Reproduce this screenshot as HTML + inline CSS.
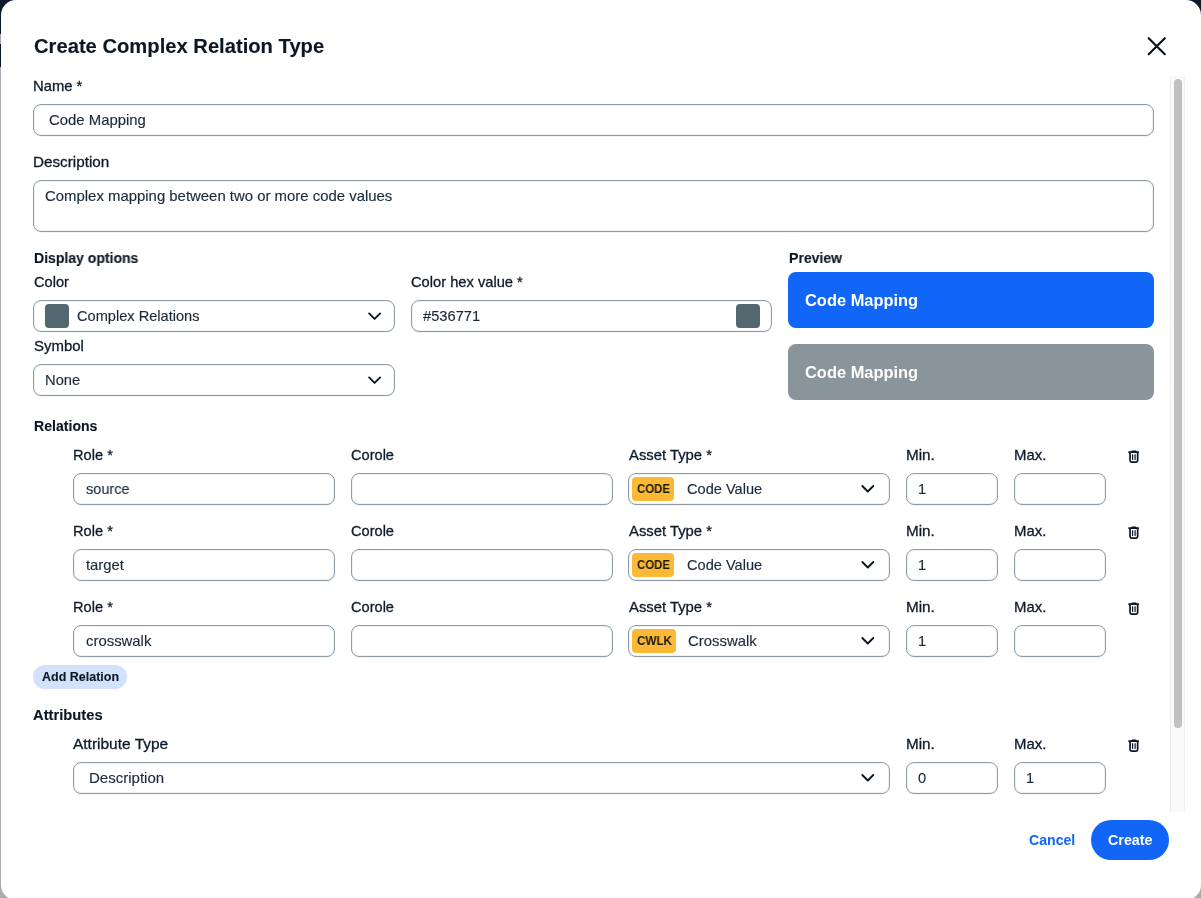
<!DOCTYPE html>
<html><head><meta charset="utf-8"><title>Create Complex Relation Type</title>
<style>
html,body{margin:0;padding:0;}
body{width:1201px;height:898px;overflow:hidden;position:relative;background:#a9abad;font-family:"Liberation Sans",sans-serif;}
.bgtop{position:absolute;left:0;top:0;width:1201px;height:34px;background:#0b1a2a;}
.bgtop2{position:absolute;left:0;top:44px;width:2px;height:23px;background:#0b1a2a;}
.modal{position:absolute;left:1px;top:0;width:1200px;height:900px;background:#fff;border-radius:15px;overflow:hidden;}
.t{position:absolute;white-space:pre;line-height:1;will-change:transform;transform-origin:0 0;}
.b{position:absolute;}
</style></head>
<body>
<div class="bgtop"></div><div class="bgtop2"></div>
<div class="modal">
<div style="position:absolute;left:-1px;top:0;width:1201px;height:898px;">
<div class="t" style="left:34.20px;top:36.00px;font-size:20.2px;font-weight:700;color:#0a1725;-webkit-text-stroke:0.12px #0a1725;">Create Complex Relation Type</div>
<svg class="b" style="left:1144px;top:34px" width="26" height="26" viewBox="0 0 26 26"><path d="M4.7 4.2 L20.8 20.2 M20.8 4.2 L4.7 20.2" stroke="#02101e" stroke-width="2.1" stroke-linecap="round"/></svg>
<div class="t" style="left:32.89px;top:79.10px;font-size:14.6px;font-weight:400;color:#0e1b2b;-webkit-text-stroke:0.3px #0e1b2b;transform:scaleX(1.0146);">Name *</div>
<div class="b" style="left:33px;top:104px;width:1121px;height:32px;border:1px solid #8f9ba5;border-radius:8px;box-sizing:border-box;box-shadow:inset 0 0 0 1px rgba(140,155,166,0.13),0 1px 0 rgba(140,155,166,0.10);"></div>
<div class="t" style="left:49.30px;top:113.00px;font-size:14.6px;font-weight:400;color:#1b2a3a;-webkit-text-stroke:0.15px #1b2a3a;transform:scaleX(1.0202);">Code Mapping</div>
<div class="t" style="left:33.26px;top:155.20px;font-size:14.6px;font-weight:400;color:#0e1b2b;-webkit-text-stroke:0.3px #0e1b2b;transform:scaleX(1.0444);">Description</div>
<div class="b" style="left:33px;top:180px;width:1121px;height:52px;border:1px solid #8f9ba5;border-radius:8px;box-sizing:border-box;box-shadow:inset 0 0 0 1px rgba(140,155,166,0.13),0 1px 0 rgba(140,155,166,0.10);"></div>
<div class="t" style="left:45.30px;top:189.00px;font-size:14.6px;font-weight:400;color:#1b2a3a;-webkit-text-stroke:0.15px #1b2a3a;transform:scaleX(1.0218);">Complex mapping between two or more code values</div>
<div class="t" style="left:33.90px;top:251.00px;font-size:14.1px;font-weight:700;color:#0a1725;-webkit-text-stroke:0.12px #0a1725;transform:scaleX(0.9943);">Display options</div>
<div class="t" style="left:33.90px;top:275.00px;font-size:14.6px;font-weight:400;color:#0e1b2b;-webkit-text-stroke:0.3px #0e1b2b;transform:scaleX(1.0029);">Color</div>
<div class="b" style="left:33px;top:300px;width:362px;height:32px;border:1px solid #8f9ba5;border-radius:8px;box-sizing:border-box;box-shadow:inset 0 0 0 1px rgba(140,155,166,0.13),0 1px 0 rgba(140,155,166,0.10);"></div>
<div class="b" style="left:45px;top:304px;width:24px;height:24px;background:#536771;border-radius:4px;"></div>
<div class="t" style="left:77.30px;top:308.70px;font-size:14.6px;font-weight:400;color:#1b2a3a;-webkit-text-stroke:0.15px #1b2a3a;">Complex Relations</div>
<svg class="b" style="left:367px;top:311px" width="16" height="11" viewBox="0 0 16 11"><path d="M2.10 2.40 L7.60 7.90 L13.10 2.40" fill="none" stroke="#0a1624" stroke-width="1.85" stroke-linecap="round" stroke-linejoin="round"/></svg>
<div class="t" style="left:33.50px;top:338.70px;font-size:14.6px;font-weight:400;color:#0e1b2b;-webkit-text-stroke:0.3px #0e1b2b;transform:scaleX(1.0250);">Symbol</div>
<div class="b" style="left:33px;top:364px;width:362px;height:32px;border:1px solid #8f9ba5;border-radius:8px;box-sizing:border-box;box-shadow:inset 0 0 0 1px rgba(140,155,166,0.13),0 1px 0 rgba(140,155,166,0.10);"></div>
<div class="t" style="left:44.69px;top:373.00px;font-size:14.6px;font-weight:400;color:#1b2a3a;-webkit-text-stroke:0.15px #1b2a3a;transform:scaleX(1.0088);">None</div>
<svg class="b" style="left:367px;top:375px" width="16" height="11" viewBox="0 0 16 11"><path d="M2.10 2.40 L7.60 7.90 L13.10 2.40" fill="none" stroke="#0a1624" stroke-width="1.85" stroke-linecap="round" stroke-linejoin="round"/></svg>
<div class="t" style="left:411.00px;top:275.00px;font-size:14.6px;font-weight:400;color:#0e1b2b;-webkit-text-stroke:0.3px #0e1b2b;transform:scaleX(1.0063);">Color hex value *</div>
<div class="b" style="left:411px;top:300px;width:361px;height:32px;border:1px solid #8f9ba5;border-radius:8px;box-sizing:border-box;box-shadow:inset 0 0 0 1px rgba(140,155,166,0.13),0 1px 0 rgba(140,155,166,0.10);"></div>
<div class="t" style="left:422.70px;top:308.70px;font-size:14.6px;font-weight:400;color:#1b2a3a;-webkit-text-stroke:0.15px #1b2a3a;transform:scaleX(1.0053);">#536771</div>
<div class="b" style="left:736px;top:304px;width:24px;height:24px;background:#536771;border-radius:4px;"></div>
<div class="t" style="left:789.00px;top:251.00px;font-size:14.1px;font-weight:700;color:#0a1725;-webkit-text-stroke:0.12px #0a1725;transform:scaleX(0.9944);">Preview</div>
<div class="b" style="left:788px;top:272px;width:366px;height:56px;background:#1166f8;border-radius:8px;"></div>
<div class="t" style="left:804.70px;top:291.60px;font-size:16.3px;font-weight:700;color:#ffffff;transform:scaleX(1.0090);">Code Mapping</div>
<div class="b" style="left:788px;top:344px;width:366px;height:56px;background:#8a959b;border-radius:8px;"></div>
<div class="t" style="left:804.70px;top:363.70px;font-size:16.3px;font-weight:700;color:#ffffff;transform:scaleX(1.0090);">Code Mapping</div>
<div class="t" style="left:33.84px;top:419.30px;font-size:14.1px;font-weight:700;color:#0a1725;-webkit-text-stroke:0.12px #0a1725;">Relations</div>
<div class="t" style="left:72.80px;top:447.80px;font-size:14.6px;font-weight:400;color:#0e1b2b;-webkit-text-stroke:0.3px #0e1b2b;transform:scaleX(1.0026);">Role *</div>
<div class="t" style="left:351.30px;top:447.80px;font-size:14.6px;font-weight:400;color:#0e1b2b;-webkit-text-stroke:0.3px #0e1b2b;">Corole</div>
<div class="t" style="left:628.75px;top:447.80px;font-size:14.6px;font-weight:400;color:#0e1b2b;-webkit-text-stroke:0.3px #0e1b2b;transform:scaleX(1.0152);">Asset Type *</div>
<div class="t" style="left:905.65px;top:447.80px;font-size:14.6px;font-weight:400;color:#0e1b2b;-webkit-text-stroke:0.3px #0e1b2b;transform:scaleX(1.0462);">Min.</div>
<div class="t" style="left:1013.88px;top:447.80px;font-size:14.6px;font-weight:400;color:#0e1b2b;-webkit-text-stroke:0.3px #0e1b2b;transform:scaleX(1.0233);">Max.</div>
<svg class="b" style="left:1127px;top:450px" width="14" height="14" viewBox="0 0 14 14"><path d="M1.9 2.1 H11.4" stroke="#0a1624" stroke-width="1.6" stroke-linecap="round"/><path d="M5 1.2 H8.9" stroke="#0a1624" stroke-width="1.4" stroke-linecap="round"/><path d="M3.05 2.5 V10.5 Q3.05 12.05 4.6 12.05 H9.1 Q10.65 12.05 10.65 10.5 V2.5" fill="none" stroke="#0a1624" stroke-width="1.7"/><path d="M5.6 4.7 V9.5 M8.1 4.7 V9.5" stroke="#0a1624" stroke-width="1.2" stroke-linecap="round"/></svg>
<div class="b" style="left:73px;top:473px;width:262px;height:32px;border:1px solid #8f9ba5;border-radius:8px;box-sizing:border-box;box-shadow:inset 0 0 0 1px rgba(140,155,166,0.13),0 1px 0 rgba(140,155,166,0.10);"></div>
<div class="t" style="left:85.70px;top:482.00px;font-size:14.6px;font-weight:400;color:#1b2a3a;-webkit-text-stroke:0.15px #1b2a3a;transform:scaleX(0.9909);">source</div>
<div class="b" style="left:351px;top:473px;width:262px;height:32px;border:1px solid #8f9ba5;border-radius:8px;box-sizing:border-box;box-shadow:inset 0 0 0 1px rgba(140,155,166,0.13),0 1px 0 rgba(140,155,166,0.10);"></div>
<div class="b" style="left:628px;top:473px;width:262px;height:32px;border:1px solid #8f9ba5;border-radius:8px;box-sizing:border-box;box-shadow:inset 0 0 0 1px rgba(140,155,166,0.13),0 1px 0 rgba(140,155,166,0.10);"></div>
<div class="b" style="left:632px;top:477px;width:42px;height:24px;background:#fbb935;border-radius:4px;"></div>
<div class="t" style="left:637.00px;top:483.20px;font-size:12.4px;font-weight:700;color:#1c1a10;transform:scaleX(0.9222);">CODE</div>
<div class="t" style="left:686.75px;top:482.00px;font-size:14.6px;font-weight:400;color:#1b2a3a;-webkit-text-stroke:0.15px #1b2a3a;">Code Value</div>
<svg class="b" style="left:860px;top:484px" width="16" height="11" viewBox="0 0 16 11"><path d="M2.30 2.00 L7.80 7.50 L13.30 2.00" fill="none" stroke="#0a1624" stroke-width="1.85" stroke-linecap="round" stroke-linejoin="round"/></svg>
<div class="b" style="left:906px;top:473px;width:92px;height:32px;border:1px solid #8f9ba5;border-radius:8px;box-sizing:border-box;box-shadow:inset 0 0 0 1px rgba(140,155,166,0.13),0 1px 0 rgba(140,155,166,0.10);"></div>
<div class="t" style="left:918.00px;top:482.00px;font-size:14.6px;font-weight:400;color:#1b2a3a;-webkit-text-stroke:0.15px #1b2a3a;">1</div>
<div class="b" style="left:1014px;top:473px;width:92px;height:32px;border:1px solid #8f9ba5;border-radius:8px;box-sizing:border-box;box-shadow:inset 0 0 0 1px rgba(140,155,166,0.13),0 1px 0 rgba(140,155,166,0.10);"></div>
<div class="t" style="left:72.80px;top:523.80px;font-size:14.6px;font-weight:400;color:#0e1b2b;-webkit-text-stroke:0.3px #0e1b2b;transform:scaleX(1.0026);">Role *</div>
<div class="t" style="left:351.30px;top:523.80px;font-size:14.6px;font-weight:400;color:#0e1b2b;-webkit-text-stroke:0.3px #0e1b2b;">Corole</div>
<div class="t" style="left:628.75px;top:523.80px;font-size:14.6px;font-weight:400;color:#0e1b2b;-webkit-text-stroke:0.3px #0e1b2b;transform:scaleX(1.0152);">Asset Type *</div>
<div class="t" style="left:905.65px;top:523.80px;font-size:14.6px;font-weight:400;color:#0e1b2b;-webkit-text-stroke:0.3px #0e1b2b;transform:scaleX(1.0462);">Min.</div>
<div class="t" style="left:1013.88px;top:523.80px;font-size:14.6px;font-weight:400;color:#0e1b2b;-webkit-text-stroke:0.3px #0e1b2b;transform:scaleX(1.0233);">Max.</div>
<svg class="b" style="left:1127px;top:526px" width="14" height="14" viewBox="0 0 14 14"><path d="M1.9 2.1 H11.4" stroke="#0a1624" stroke-width="1.6" stroke-linecap="round"/><path d="M5 1.2 H8.9" stroke="#0a1624" stroke-width="1.4" stroke-linecap="round"/><path d="M3.05 2.5 V10.5 Q3.05 12.05 4.6 12.05 H9.1 Q10.65 12.05 10.65 10.5 V2.5" fill="none" stroke="#0a1624" stroke-width="1.7"/><path d="M5.6 4.7 V9.5 M8.1 4.7 V9.5" stroke="#0a1624" stroke-width="1.2" stroke-linecap="round"/></svg>
<div class="b" style="left:73px;top:549px;width:262px;height:32px;border:1px solid #8f9ba5;border-radius:8px;box-sizing:border-box;box-shadow:inset 0 0 0 1px rgba(140,155,166,0.13),0 1px 0 rgba(140,155,166,0.10);"></div>
<div class="t" style="left:85.70px;top:558.00px;font-size:14.6px;font-weight:400;color:#1b2a3a;-webkit-text-stroke:0.15px #1b2a3a;transform:scaleX(1.0158);">target</div>
<div class="b" style="left:351px;top:549px;width:262px;height:32px;border:1px solid #8f9ba5;border-radius:8px;box-sizing:border-box;box-shadow:inset 0 0 0 1px rgba(140,155,166,0.13),0 1px 0 rgba(140,155,166,0.10);"></div>
<div class="b" style="left:628px;top:549px;width:262px;height:32px;border:1px solid #8f9ba5;border-radius:8px;box-sizing:border-box;box-shadow:inset 0 0 0 1px rgba(140,155,166,0.13),0 1px 0 rgba(140,155,166,0.10);"></div>
<div class="b" style="left:632px;top:553px;width:42px;height:24px;background:#fbb935;border-radius:4px;"></div>
<div class="t" style="left:637.00px;top:559.20px;font-size:12.4px;font-weight:700;color:#1c1a10;transform:scaleX(0.9222);">CODE</div>
<div class="t" style="left:686.75px;top:558.00px;font-size:14.6px;font-weight:400;color:#1b2a3a;-webkit-text-stroke:0.15px #1b2a3a;">Code Value</div>
<svg class="b" style="left:860px;top:560px" width="16" height="11" viewBox="0 0 16 11"><path d="M2.30 2.00 L7.80 7.50 L13.30 2.00" fill="none" stroke="#0a1624" stroke-width="1.85" stroke-linecap="round" stroke-linejoin="round"/></svg>
<div class="b" style="left:906px;top:549px;width:92px;height:32px;border:1px solid #8f9ba5;border-radius:8px;box-sizing:border-box;box-shadow:inset 0 0 0 1px rgba(140,155,166,0.13),0 1px 0 rgba(140,155,166,0.10);"></div>
<div class="t" style="left:918.00px;top:558.00px;font-size:14.6px;font-weight:400;color:#1b2a3a;-webkit-text-stroke:0.15px #1b2a3a;">1</div>
<div class="b" style="left:1014px;top:549px;width:92px;height:32px;border:1px solid #8f9ba5;border-radius:8px;box-sizing:border-box;box-shadow:inset 0 0 0 1px rgba(140,155,166,0.13),0 1px 0 rgba(140,155,166,0.10);"></div>
<div class="t" style="left:72.80px;top:599.80px;font-size:14.6px;font-weight:400;color:#0e1b2b;-webkit-text-stroke:0.3px #0e1b2b;transform:scaleX(1.0026);">Role *</div>
<div class="t" style="left:351.30px;top:599.80px;font-size:14.6px;font-weight:400;color:#0e1b2b;-webkit-text-stroke:0.3px #0e1b2b;">Corole</div>
<div class="t" style="left:628.75px;top:599.80px;font-size:14.6px;font-weight:400;color:#0e1b2b;-webkit-text-stroke:0.3px #0e1b2b;transform:scaleX(1.0152);">Asset Type *</div>
<div class="t" style="left:905.65px;top:599.80px;font-size:14.6px;font-weight:400;color:#0e1b2b;-webkit-text-stroke:0.3px #0e1b2b;transform:scaleX(1.0462);">Min.</div>
<div class="t" style="left:1013.88px;top:599.80px;font-size:14.6px;font-weight:400;color:#0e1b2b;-webkit-text-stroke:0.3px #0e1b2b;transform:scaleX(1.0233);">Max.</div>
<svg class="b" style="left:1127px;top:602px" width="14" height="14" viewBox="0 0 14 14"><path d="M1.9 2.1 H11.4" stroke="#0a1624" stroke-width="1.6" stroke-linecap="round"/><path d="M5 1.2 H8.9" stroke="#0a1624" stroke-width="1.4" stroke-linecap="round"/><path d="M3.05 2.5 V10.5 Q3.05 12.05 4.6 12.05 H9.1 Q10.65 12.05 10.65 10.5 V2.5" fill="none" stroke="#0a1624" stroke-width="1.7"/><path d="M5.6 4.7 V9.5 M8.1 4.7 V9.5" stroke="#0a1624" stroke-width="1.2" stroke-linecap="round"/></svg>
<div class="b" style="left:73px;top:625px;width:262px;height:32px;border:1px solid #8f9ba5;border-radius:8px;box-sizing:border-box;box-shadow:inset 0 0 0 1px rgba(140,155,166,0.13),0 1px 0 rgba(140,155,166,0.10);"></div>
<div class="t" style="left:85.70px;top:634.00px;font-size:14.6px;font-weight:400;color:#1b2a3a;-webkit-text-stroke:0.15px #1b2a3a;transform:scaleX(1.0203);">crosswalk</div>
<div class="b" style="left:351px;top:625px;width:262px;height:32px;border:1px solid #8f9ba5;border-radius:8px;box-sizing:border-box;box-shadow:inset 0 0 0 1px rgba(140,155,166,0.13),0 1px 0 rgba(140,155,166,0.10);"></div>
<div class="b" style="left:628px;top:625px;width:262px;height:32px;border:1px solid #8f9ba5;border-radius:8px;box-sizing:border-box;box-shadow:inset 0 0 0 1px rgba(140,155,166,0.13),0 1px 0 rgba(140,155,166,0.10);"></div>
<div class="b" style="left:632px;top:629px;width:44px;height:24px;background:#fbb935;border-radius:4px;"></div>
<div class="t" style="left:637.00px;top:635.20px;font-size:12.4px;font-weight:700;color:#1c1a10;transform:scaleX(0.9378);">CWLK</div>
<div class="t" style="left:688.30px;top:634.00px;font-size:14.6px;font-weight:400;color:#1b2a3a;-webkit-text-stroke:0.15px #1b2a3a;transform:scaleX(1.0209);">Crosswalk</div>
<svg class="b" style="left:860px;top:636px" width="16" height="11" viewBox="0 0 16 11"><path d="M2.30 2.00 L7.80 7.50 L13.30 2.00" fill="none" stroke="#0a1624" stroke-width="1.85" stroke-linecap="round" stroke-linejoin="round"/></svg>
<div class="b" style="left:906px;top:625px;width:92px;height:32px;border:1px solid #8f9ba5;border-radius:8px;box-sizing:border-box;box-shadow:inset 0 0 0 1px rgba(140,155,166,0.13),0 1px 0 rgba(140,155,166,0.10);"></div>
<div class="t" style="left:918.00px;top:634.00px;font-size:14.6px;font-weight:400;color:#1b2a3a;-webkit-text-stroke:0.15px #1b2a3a;">1</div>
<div class="b" style="left:1014px;top:625px;width:92px;height:32px;border:1px solid #8f9ba5;border-radius:8px;box-sizing:border-box;box-shadow:inset 0 0 0 1px rgba(140,155,166,0.13),0 1px 0 rgba(140,155,166,0.10);"></div>
<div class="b" style="left:33px;top:665px;width:94px;height:24px;background:#d3e2fc;border-radius:12px;"></div>
<div class="t" style="left:41.70px;top:670.60px;font-size:12.4px;font-weight:700;color:#0a1725;-webkit-text-stroke:0.12px #0a1725;transform:scaleX(1.0079);">Add Relation</div>
<div class="t" style="left:33.30px;top:708.00px;font-size:14.1px;font-weight:700;color:#0a1725;-webkit-text-stroke:0.12px #0a1725;transform:scaleX(1.0455);">Attributes</div>
<div class="t" style="left:73.30px;top:736.60px;font-size:14.6px;font-weight:400;color:#0e1b2b;-webkit-text-stroke:0.3px #0e1b2b;transform:scaleX(1.0600);">Attribute Type</div>
<div class="t" style="left:905.65px;top:736.60px;font-size:14.6px;font-weight:400;color:#0e1b2b;-webkit-text-stroke:0.3px #0e1b2b;transform:scaleX(1.0462);">Min.</div>
<div class="t" style="left:1013.88px;top:736.60px;font-size:14.6px;font-weight:400;color:#0e1b2b;-webkit-text-stroke:0.3px #0e1b2b;transform:scaleX(1.0233);">Max.</div>
<svg class="b" style="left:1127px;top:739px" width="14" height="14" viewBox="0 0 14 14"><path d="M1.9 2.1 H11.4" stroke="#0a1624" stroke-width="1.6" stroke-linecap="round"/><path d="M5 1.2 H8.9" stroke="#0a1624" stroke-width="1.4" stroke-linecap="round"/><path d="M3.05 2.5 V10.5 Q3.05 12.05 4.6 12.05 H9.1 Q10.65 12.05 10.65 10.5 V2.5" fill="none" stroke="#0a1624" stroke-width="1.7"/><path d="M5.6 4.7 V9.5 M8.1 4.7 V9.5" stroke="#0a1624" stroke-width="1.2" stroke-linecap="round"/></svg>
<div class="b" style="left:73px;top:762px;width:817px;height:32px;border:1px solid #8f9ba5;border-radius:8px;box-sizing:border-box;box-shadow:inset 0 0 0 1px rgba(140,155,166,0.13),0 1px 0 rgba(140,155,166,0.10);"></div>
<div class="t" style="left:88.87px;top:770.70px;font-size:14.6px;font-weight:400;color:#1b2a3a;-webkit-text-stroke:0.15px #1b2a3a;transform:scaleX(1.0292);">Description</div>
<svg class="b" style="left:860px;top:773px" width="16" height="11" viewBox="0 0 16 11"><path d="M2.30 2.00 L7.80 7.50 L13.30 2.00" fill="none" stroke="#0a1624" stroke-width="1.85" stroke-linecap="round" stroke-linejoin="round"/></svg>
<div class="b" style="left:906px;top:762px;width:92px;height:32px;border:1px solid #8f9ba5;border-radius:8px;box-sizing:border-box;box-shadow:inset 0 0 0 1px rgba(140,155,166,0.13),0 1px 0 rgba(140,155,166,0.10);"></div>
<div class="t" style="left:918.30px;top:770.70px;font-size:14.6px;font-weight:400;color:#1b2a3a;-webkit-text-stroke:0.15px #1b2a3a;">0</div>
<div class="b" style="left:1014px;top:762px;width:92px;height:32px;border:1px solid #8f9ba5;border-radius:8px;box-sizing:border-box;box-shadow:inset 0 0 0 1px rgba(140,155,166,0.13),0 1px 0 rgba(140,155,166,0.10);"></div>
<div class="t" style="left:1026.00px;top:770.70px;font-size:14.6px;font-weight:400;color:#1b2a3a;-webkit-text-stroke:0.15px #1b2a3a;">1</div>
<div class="b" style="left:1170px;top:76px;width:15px;height:736px;background:#fafafa;border-left:1px solid #ececec;border-right:1px solid #f0f0f0;box-sizing:border-box;"></div>
<div class="b" style="left:1174px;top:79px;width:8px;height:649px;background:#c1c1c1;border-radius:4px;"></div>
<div class="t" style="left:1028.90px;top:833.90px;font-size:13.9px;font-weight:700;color:#1166f8;transform:scaleX(1.0156);">Cancel</div>
<div class="b" style="left:1091px;top:820px;width:78px;height:40px;background:#1166f8;border-radius:20px;"></div>
<div class="t" style="left:1107.90px;top:832.90px;font-size:14.2px;font-weight:700;color:#ffffff;transform:scaleX(1.0091);">Create</div>
</div>
</div>
</body></html>
